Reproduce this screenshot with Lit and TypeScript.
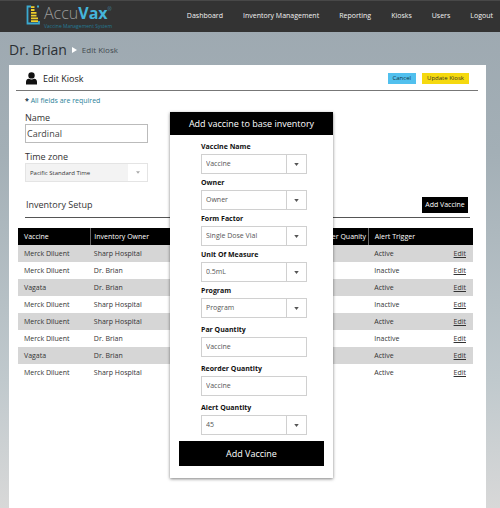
import { LitElement, html, css, svg } from "lit";
import { customElement, property } from "lit/decorators.js";

const caret = svg`<path d="M0 0h6l-3 4z" fill="currentColor" />`;

@customElement("vax-field")
class VaxField extends LitElement {
  @property() label = "";
  @property() value = "";
  @property() kind: "select" | "text" = "select";

  static styles = css`
    :host {
      display: block;
    }
    .label {
      display: block;
      font-size: 7px;
      font-weight: 700;
      line-height: 10px;
      margin-bottom: 2px;
      color: #111;
    }
    .box {
      display: grid;
      grid-template-columns: 1fr 20px;
      height: 20px;
      box-sizing: border-box;
      border: 1px solid #d0d0d0;
      background: #fff;
    }
    .control {
      grid-area: 1 / 1 / 2 / 3;
      appearance: none;
      box-sizing: border-box;
      width: 100%;
      min-width: 0;
      margin: 0;
      padding: 0 4px;
      border: 0;
      border-radius: 0;
      background: none;
      font: 7px/16px "Open Sans", sans-serif;
      color: #555;
    }
    .arrow {
      grid-area: 1 / 2;
      display: flex;
      align-items: center;
      justify-content: center;
      border-left: 1px solid #d0d0d0;
      pointer-events: none;
      color: #555;
    }
  `;

  render() {
    return html`
      <label class="label" for="control">${this.label}</label>
      <div class="box">
        ${this.kind === "select"
          ? html`<select class="control" id="control"><option>${this.value}</option></select>
              <span class="arrow"><svg width="5" height="3" viewBox="0 0 6 4">${caret}</svg></span>`
          : html`<input class="control" id="control" type="text" .value=${this.value} />`}
      </div>
    `;
  }
}

const NAV = ["Dashboard", "Inventory Management", "Reporting", "Kiosks", "Users", "Logout"];

const ROWS = [
  ["Merck Diluent", "Sharp Hospital", "Active"],
  ["Merck Diluent", "Dr. Brian", "Inactive"],
  ["Vagata", "Dr. Brian", "Active"],
  ["Merck Diluent", "Sharp Hospital", "Inactive"],
  ["Merck Diluent", "Sharp Hospital", "Active"],
  ["Merck Diluent", "Dr. Brian", "Inactive"],
  ["Vagata", "Dr. Brian", "Active"],
  ["Merck Diluent", "Sharp Hospital", "Active"],
];

const FIELDS: { label: string; value: string; kind: "select" | "text" }[] = [
  { label: "Vaccine Name", value: "Vaccine", kind: "select" },
  { label: "Owner", value: "Owner", kind: "select" },
  { label: "Form Factor", value: "Single Dose Vial", kind: "select" },
  { label: "Unit Of Measure", value: "0.5mL", kind: "select" },
  { label: "Program", value: "Program", kind: "select" },
  { label: "Par Quantity", value: "Vaccine", kind: "text" },
  { label: "Reorder Quantity", value: "Vaccine", kind: "text" },
  { label: "Alert Quantity", value: "45", kind: "select" },
];

@customElement("app-root")
class AppRoot extends LitElement {
  static styles = css`
    :host {
      display: flex;
      flex-direction: column;
      position: relative;
      min-height: 100vh;
      font-family: "Open Sans", sans-serif;
      color: #333;
      background: linear-gradient(#9da8b0, #a3afb6 30%, #c0c9cd 75%, #d8d8d8);
    }
    button {
      border: 0;
      border-radius: 0;
      padding: 0;
      margin: 0;
      font-family: inherit;
      cursor: pointer;
    }
    .top {
      display: flex;
      justify-content: space-between;
      box-sizing: border-box;
      height: 32px;
      padding: 0 7px 0 26px;
      background: #333;
      border-top: 1px solid #484848;
    }
    .brand {
      display: flex;
      gap: 3px;
      padding-top: 2px;
    }
    .mark {
      display: block;
      width: 15px;
      height: 20px;
      margin-top: 2px;
    }
    .name {
      font-size: 16px;
      line-height: 20px;
      font-weight: 300;
      color: #999;
    }
    .name b {
      font-weight: 700;
      color: #45b5da;
    }
    .name sup {
      font-size: 5px;
      line-height: 12px;
      vertical-align: top;
      color: #45b5da;
    }
    .tagline {
      font-size: 5px;
      line-height: 6px;
      color: #247a94;
    }
    .nav {
      display: flex;
      gap: 20px;
      font-size: 7px;
      line-height: 29px;
    }
    .nav a {
      color: #f2f2f2;
      text-decoration: none;
    }
    .crumbs {
      display: flex;
      align-items: center;
      gap: 5px;
      height: 33px;
      padding: 2px 9px 0;
      box-sizing: border-box;
    }
    .crumbs h1 {
      margin: 0;
      font-size: 14px;
      line-height: 20px;
      font-weight: 400;
      color: #2b2f33;
    }
    .crumbs .here {
      font-size: 8px;
      line-height: 12px;
      color: #444b50;
    }
    .card {
      flex: 1;
      margin: 0 14px 0 9px;
      background: #fff;
    }
    .cardhead {
      display: flex;
      align-items: center;
      gap: 6px;
      height: 26px;
      box-sizing: border-box;
      margin: 0 8px 0 7px;
      padding: 2px 9px 0 10px;
      border-bottom: 1px solid #777;
    }
    .cardhead h2 {
      flex: 1;
      margin: 0;
      font-size: 9px;
      line-height: 14px;
      font-weight: 400;
      color: #222;
    }
    .small {
      height: 11px;
      font-size: 6px;
      line-height: 11px;
      padding: 0 5px;
      color: #134;
    }
    .cancel {
      background: #51c0ee;
    }
    .update {
      background: #f5d90f;
      color: #332;
    }
    .form {
      padding: 5px 16px 0;
    }
    .note {
      margin: 0 0 6px;
      font-size: 7px;
      line-height: 10px;
      color: #2a8299;
    }
    .note b {
      color: #134;
    }
    .formlabel {
      display: block;
      font-size: 9px;
      line-height: 12px;
    }
    .text,
    .zone {
      width: 123px;
      height: 19px;
      box-sizing: border-box;
      border: 1px solid #bbb;
      background: #fff;
    }
    .text {
      display: block;
      padding: 0 1px;
      margin-bottom: 8px;
      font: 9px/17px "Open Sans", sans-serif;
      color: #444;
    }
    .zone {
      display: grid;
      grid-template-columns: 1fr 19px;
      border-color: #e4e4e4;
      background: linear-gradient(to left, #fff 19px, #f3f3f3 19px);
    }
    .zone select {
      grid-area: 1 / 1 / 2 / 3;
      appearance: none;
      min-width: 0;
      margin: 0;
      padding: 0 4px;
      border: 0;
      background: none;
      font: 6px/16px "Open Sans", sans-serif;
      color: #333;
    }
    .zone span {
      grid-area: 1 / 2;
      display: flex;
      align-items: center;
      justify-content: center;
      pointer-events: none;
      color: #aaa;
    }
    .setup {
      display: flex;
      align-items: center;
      justify-content: space-between;
      height: 26px;
      box-sizing: border-box;
      margin: 10px 0 10px;
      padding: 0 2px 0 1px;
      border-bottom: 1px solid #555;
    }
    .setup h3 {
      margin: 0;
      font-size: 9px;
      line-height: 14px;
      font-weight: 400;
    }
    .add {
      width: 46px;
      height: 16px;
      background: #000;
      color: #fff;
      font-size: 7px;
      line-height: 16px;
    }
    .tablewrap {
      padding: 0 13px 0 9px;
    }
    table {
      width: 100%;
      table-layout: fixed;
      border-collapse: collapse;
      font-size: 7px;
      line-height: 10px;
      color: #333;
    }
    th,
    td {
      box-sizing: border-box;
      height: 17px;
      padding: 0 4px 0 3px;
      white-space: nowrap;
    }
    th {
      font-weight: 400;
      text-align: left;
      color: #fff;
      background: #000;
    }
    .vaccine {
      width: 16%;
    }
    .owner {
      width: 48%;
    }
    .reorder {
      width: 13%;
      text-align: right;
    }
    .edit {
      width: 10%;
    }
    th + th {
      border-left: 1px solid #666;
    }
    th.plain {
      border-left: 0;
    }
    th:first-child,
    td:first-child {
      padding-left: 6px;
    }
    th:nth-child(4),
    td:nth-child(4) {
      padding-left: 6px;
    }
    td:last-child {
      text-align: right;
      padding-right: 7px;
    }
    td a {
      color: #333;
    }
    tbody tr:nth-child(odd) {
      background: #d6d6d6;
    }
    .dialog {
      position: absolute;
      top: 112px;
      left: 34%;
      width: 163px;
      box-sizing: border-box;
      margin: 0;
      padding: 0 0 12px;
      border: 0;
      display: block;
      background: #fff;
      box-shadow: 0 1px 3px rgba(0, 0, 0, 0.5);
    }
    .dialog h2 {
      margin: 0;
      font-size: 9px;
      line-height: 23px;
      font-weight: 400;
      text-align: center;
      color: #fff;
      background: #000;
    }
    .fields {
      display: flex;
      flex-direction: column;
      gap: 4px;
      padding: 7px 26px 6px 31px;
    }
    .roomy {
      margin-top: 3px;
    }
    .submit {
      display: block;
      width: 145px;
      height: 25px;
      margin: 0 auto;
      background: #000;
      color: #fff;
      font-size: 9px;
      line-height: 25px;
    }
  `;

  render() {
    return html`
      <header class="top">
        <div class="brand">
          <svg class="mark" viewBox="0 0 15 20">
            <path d="M5 1.500H1.500v17H13V16M11 1.500h2" fill="none" stroke="#3ba9cf" stroke-width="1.800" />
            <path d="M5 16.200h7M5 13.400h7M5 10.600h5.500M5 7.800h5.500M5 5h3.500M5 2.200h3.500" stroke="#f0cf2b" stroke-width="1.800" />
          </svg>
          <div>
            <div class="name">Accu<b>Vax</b><sup>®</sup></div>
            <div class="tagline">Vaccine Management System</div>
          </div>
        </div>
        <nav class="nav">${NAV.map((n) => html`<a href="#">${n}</a>`)}</nav>
      </header>
      <div class="crumbs">
        <h1>Dr. Brian</h1>
        <svg width="5" height="6" viewBox="0 0 5 6"><path d="M0 0l5 3-5 3z" fill="#fff" /></svg>
        <span class="here">Edit Kiosk</span>
      </div>
      <main class="card">
        <div class="cardhead">
          <svg width="11" height="13" viewBox="0 0 11 13">
            <circle cx="5.500" cy="3.400" r="3.200" fill="#111" />
            <path d="M0 12.500V10q0-3 2.800-3.200 2.700 1.600 5.400 0Q11 7 11 10v2.500z" fill="#111" />
          </svg>
          <h2>Edit Kiosk</h2>
          <button class="small cancel" type="button">Cancel</button>
          <button class="small update" type="button">Update Kiosk</button>
        </div>
        <div class="form">
          <p class="note"><b>*</b> All fields are required</p>
          <label class="formlabel" for="name">Name</label>
          <input class="text" id="name" type="text" value="Cardinal" />
          <label class="formlabel" for="zone">Time zone</label>
          <div class="zone">
            <select id="zone"><option>Pacific Standard Time</option></select>
            <span><svg width="4" height="3" viewBox="0 0 6 4">${caret}</svg></span>
          </div>
          <div class="setup">
            <h3>Inventory Setup</h3>
            <button class="add" type="button">Add Vaccine</button>
          </div>
        </div>
        <div class="tablewrap">
          <table>
            <thead>
              <tr>
                <th class="vaccine">Vaccine</th>
                <th class="owner">Inventory Owner</th>
                <th class="reorder plain">Reorder Quanity</th>
                <th>Alert Trigger</th>
                <th class="edit plain"></th>
              </tr>
            </thead>
            <tbody>
              ${ROWS.map(
                ([vaccine, owner, alert]) => html`<tr>
                  <td>${vaccine}</td>
                  <td>${owner}</td>
                  <td></td>
                  <td>${alert}</td>
                  <td><a href="#">Edit</a></td>
                </tr>`
              )}
            </tbody>
          </table>
        </div>
      </main>
      <dialog class="dialog" open aria-labelledby="dialog-title">
        <h2 id="dialog-title">Add vaccine to base inventory</h2>
        <div class="fields">
          ${FIELDS.map(
            (f, i) => html`<vax-field
              class=${i > 4 ? "roomy" : ""}
              .label=${f.label}
              .value=${f.value}
              .kind=${f.kind}
            ></vax-field>`
          )}
        </div>
        <button class="submit" type="button">Add Vaccine</button>
      </dialog>
    `;
  }
}
